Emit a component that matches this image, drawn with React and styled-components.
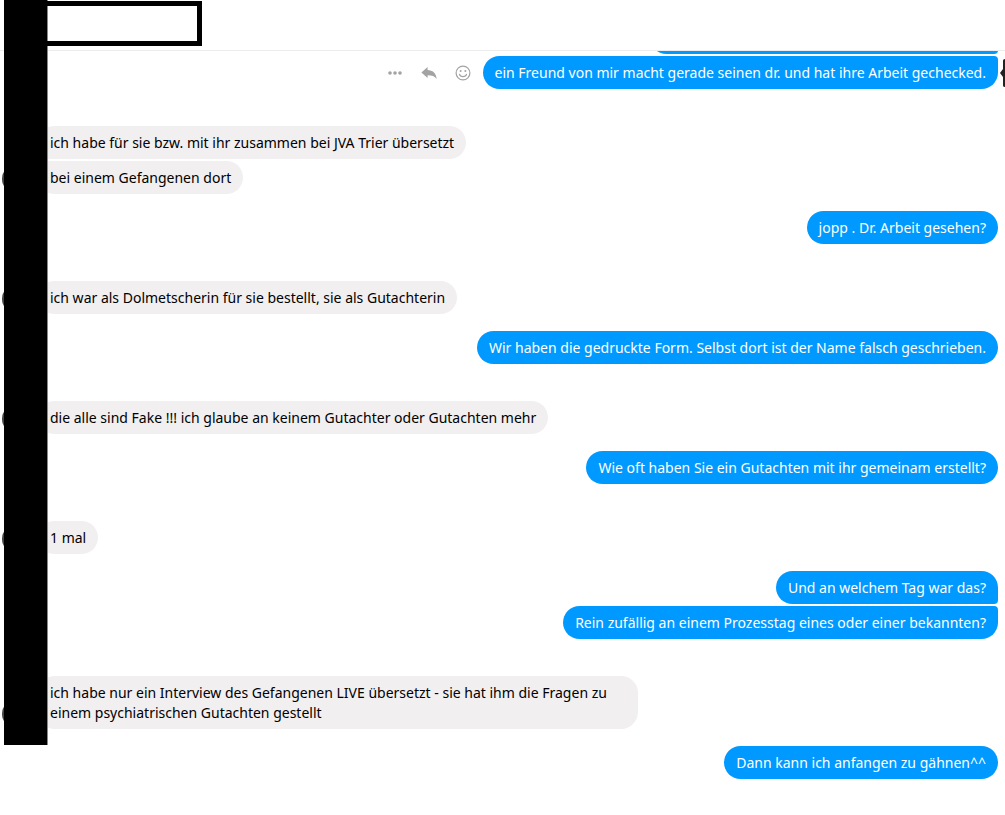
import React from "react";
import styled, { createGlobalStyle } from "styled-components";

const GlobalStyle = createGlobalStyle`
* {
  box-sizing: border-box;
}
body {
  margin: 0;
  background: #fff;
  font-family: "Noto Sans", "Open Sans", sans-serif;
  font-size: 14px;
  line-height: 20px;
}
`;

const groups = [
  {
    from: "me",
    hovered: true,
    messages: ["ein Freund von mir macht gerade seinen dr. und hat ihre Arbeit gechecked."],
  },
  {
    from: "them",
    messages: [
      "ich habe für sie bzw. mit ihr zusammen bei JVA Trier übersetzt",
      "bei einem Gefangenen dort",
    ],
  },
  { from: "me", messages: ["jopp . Dr. Arbeit gesehen?"] },
  {
    from: "them",
    messages: ["ich war als Dolmetscherin für sie bestellt, sie als Gutachterin"],
  },
  {
    from: "me",
    messages: ["Wir haben die gedruckte Form. Selbst dort ist der Name falsch geschrieben."],
  },
  {
    from: "them",
    messages: ["die alle sind Fake !!! ich glaube an keinem Gutachter oder Gutachten mehr"],
  },
  { from: "me", messages: ["Wie oft haben Sie ein Gutachten mit ihr gemeinam erstellt?"] },
  { from: "them", messages: ["1 mal"] },
  {
    from: "me",
    messages: [
      "Und an welchem Tag war das?",
      "Rein zufällig an einem Prozesstag eines oder einer bekannten?",
    ],
  },
  {
    from: "them",
    messages: [
      "ich habe nur ein Interview des Gefangenen LIVE übersetzt - sie hat ihm die Fragen zu einem psychiatrischen Gutachten gestellt",
    ],
  },
];

const MessageActions = () => (
  <Actions>
    <IconButton aria-label="Mehr">
      <svg width="16" height="16" viewBox="0 0 16 16" fill="#a3a3a3">
        <circle cx="3" cy="8" r="1.8" />
        <circle cx="8" cy="8" r="1.8" />
        <circle cx="13" cy="8" r="1.8" />
      </svg>
    </IconButton>
    <IconButton aria-label="Antworten">
      <svg width="16" height="16" viewBox="0 0 16 16" fill="#a3a3a3">
        <path d="M0.4 7.4 L6.6 2 V5.1 C11.5 5.3 15.2 8.2 15.6 14 C13.8 11.2 11 10.2 6.6 10.2 V13.1 Z" />
      </svg>
    </IconButton>
    <IconButton aria-label="Reagieren">
      <svg width="16" height="16" viewBox="0 0 16 16" fill="none" stroke="#a3a3a3" strokeWidth="1.2">
        <circle cx="8" cy="8" r="6.9" />
        <path d="M4.5 9.4 C5.3 12.4 10.7 12.4 11.5 9.4" strokeLinecap="round" />
        <circle cx="5.6" cy="6" r="1" fill="#a3a3a3" stroke="none" />
        <circle cx="10.4" cy="6" r="1" fill="#a3a3a3" stroke="none" />
      </svg>
    </IconButton>
  </Actions>
);

const MessageGroup = ({ group }) => {
  const mine = group.from === "me";
  const last = group.messages.length - 1;
  return (
    <Group $mine={mine}>
      {!mine && <Avatar />}
      <Stack $mine={mine}>
        {group.messages.map((text, i) => (
          <MessageRow key={i}>
            {group.hovered && <MessageActions />}
            <Bubble $mine={mine} $joinTop={group.hovered || i > 0} $joinBottom={i < last}>
              {text}
            </Bubble>
          </MessageRow>
        ))}
      </Stack>
    </Group>
  );
};

const App = () => {
  return (
    <Page>
      <GlobalStyle />
      <Upper>
        <Header />
        <Clipped>
          <ClippedBubble />
        </Clipped>
        <Thread>
          {groups.map((g, i) => (
            <MessageGroup key={i} group={g} />
          ))}
        </Thread>
        <Redaction />
        <NameBox />
        <TimeTip viewBox="0 0 5 28">
          <path d="M0 14 L3 10 V1.5 Q3 0 5 0 V28 Q3 28 3 26.5 V18 Z" fill="#222" />
        </TimeTip>
      </Upper>
      <Thread>
        <MessageGroup group={{ from: "me", messages: ["Dann kann ich anfangen zu gähnen^^"] }} />
      </Thread>
    </Page>
  );
};

export default App;

const Page = styled.main`
  min-height: 100vh;
  overflow: hidden;
`;
const Upper = styled.div`
  position: relative;
  padding-bottom: 17px;
`;
const Header = styled.header`
  height: 51px;
  border-bottom: 1px solid #ececec;
`;
const Clipped = styled.div`
  display: flex;
  justify-content: flex-end;
  align-items: flex-end;
  height: 3px;
  margin-bottom: 2px;
  padding-right: 7px;
  overflow: hidden;
`;
const Thread = styled.section`
  padding: 0 7px 0 2px;
`;
const Group = styled.div`
  display: flex;
  align-items: flex-end;
  gap: 8px;
  justify-content: ${(p) => (p.$mine ? "flex-end" : "flex-start")};
  margin-top: ${(p) => (p.$mine ? "17px" : "37px")};

  &:first-child {
    margin-top: 0;
  }
`;
const Stack = styled.div`
  display: flex;
  flex-direction: column;
  align-items: ${(p) => (p.$mine ? "flex-end" : "flex-start")};
  gap: 2px;
`;
const MessageRow = styled.div`
  display: flex;
  align-items: center;
`;
const Bubble = styled.div`
  max-width: 600px;
  padding: 7px 12px 6px;
  color: ${(p) => (p.$mine ? "#fff" : "#000")};
  background: ${(p) => (p.$mine ? "#0099ff" : "#f1eff0")};
  border-radius: ${(p) =>
    p.$mine
      ? `17px ${p.$joinTop ? "4px" : "17px"} ${p.$joinBottom ? "4px" : "17px"} 17px`
      : `${p.$joinTop ? "4px" : "17px"} 17px 17px ${p.$joinBottom ? "4px" : "17px"}`};
`;
const ClippedBubble = styled.div`
  flex: none;
  width: 348px;
  height: 33px;
  background: #0099ff;
  border-radius: 17px 17px 4px 17px;
`;
const Avatar = styled.div`
  flex: none;
  width: 28px;
  height: 28px;
  margin-bottom: 1px;
  border-radius: 50%;
  background: #4a4642;
`;
const Actions = styled.div`
  display: flex;
  gap: 18px;
  padding-right: 12px;
`;
const IconButton = styled.button`
  display: flex;
  padding: 0;
  border: 0;
  background: none;
  cursor: pointer;
`;
const NameBox = styled.div`
  position: absolute;
  top: 1px;
  left: 47px;
  width: 155px;
  height: 45px;
  border: 5px solid #000;
  border-left: 0;
`;
const Redaction = styled.div`
  position: absolute;
  top: 0;
  bottom: 1px;
  left: 4px;
  width: 44px;
  background: #000;
  border-right: 1px solid #888;
`;
const TimeTip = styled.svg`
  position: absolute;
  top: 59px;
  right: 0;
  width: 5px;
  height: 28px;
`;
